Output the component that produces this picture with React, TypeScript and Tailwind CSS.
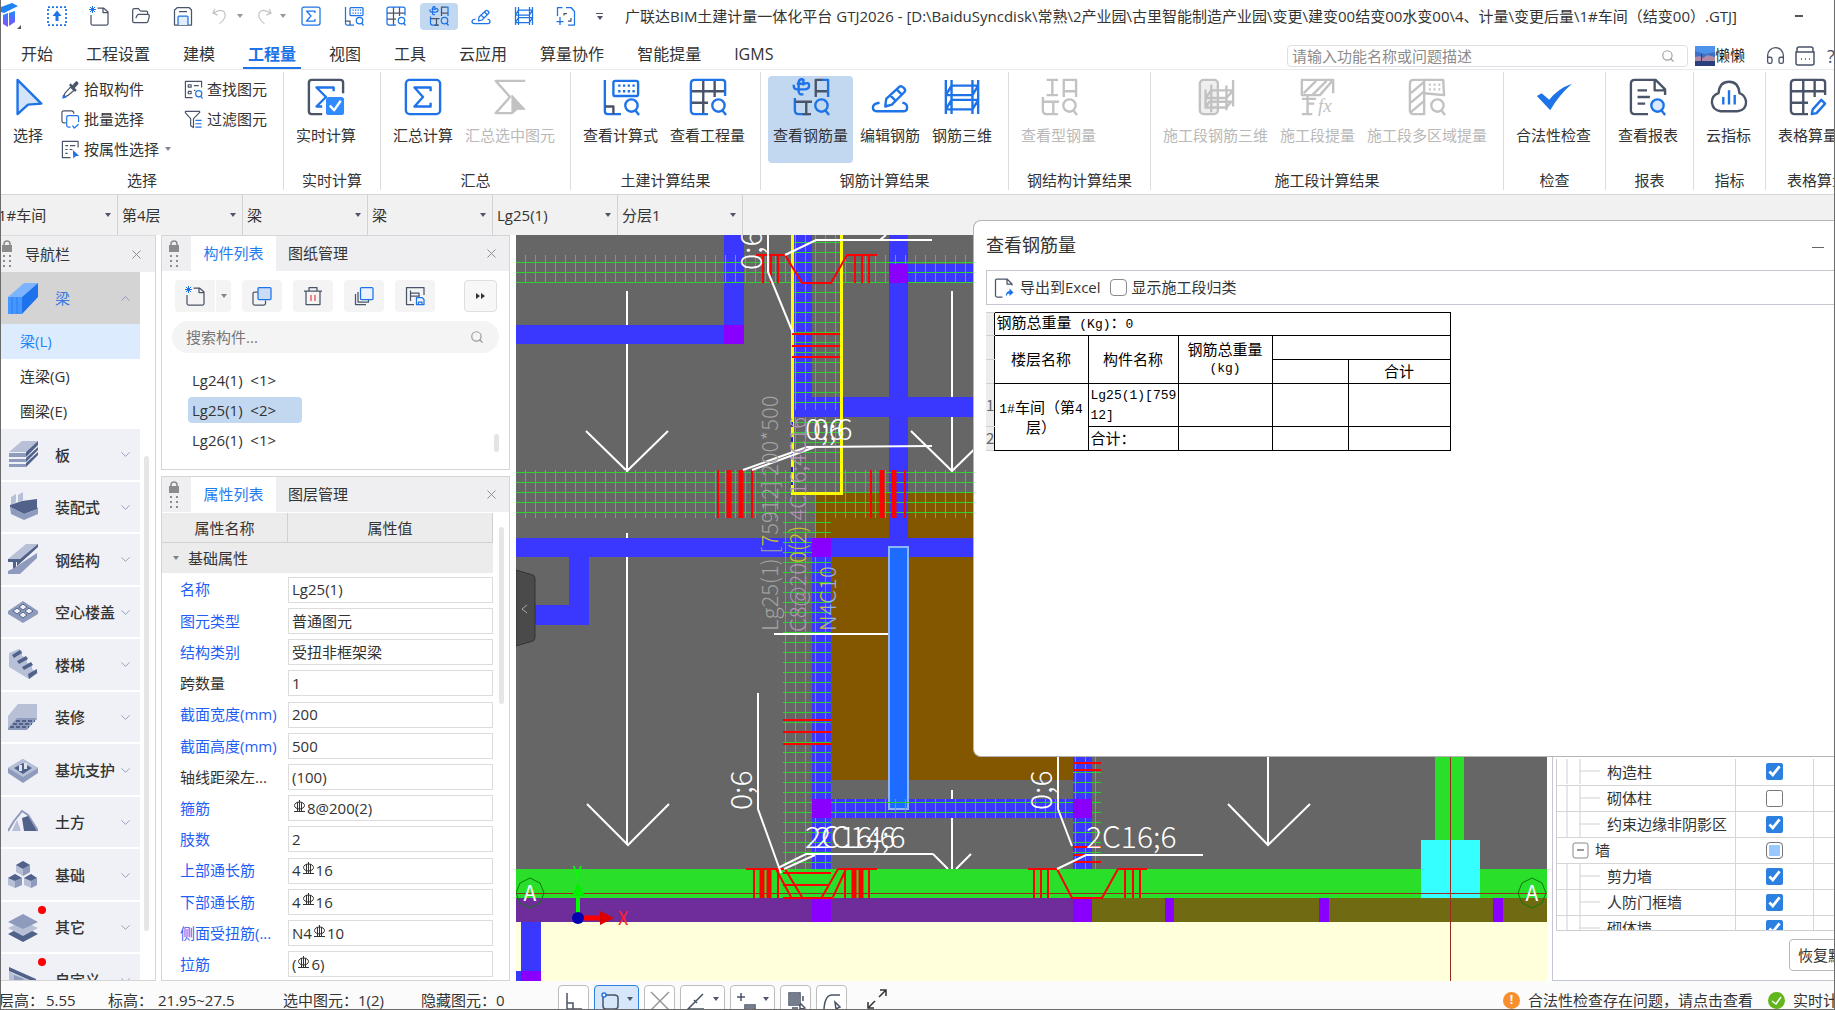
import React, { useState } from 'react';
import { ChevronDown, ChevronUp, FolderOpen, Headphones, Search, X } from 'lucide-react';

const BLUE = '#1e73e8';
const DARK = '#4a5468';
const GREY = '#c2c2c2';

interface IconProps {
  name: string;
  size?: number;
  off?: boolean;
}

const Glyph: React.FC<IconProps> = ({ name, size = 38, off = false }) => {
  const b = off ? GREY : BLUE;
  const d = off ? GREY : DARK;
  const lens = (
    <g stroke={b}>
      <circle cx="31" cy="29" r="6.5" />
      <path d="M35 34L39 39" />
    </g>
  );
  const shapes: Record<string, React.ReactNode> = {
    cursor: <path d="M9 2L34 27L20 28L9 38Z" stroke={b} fill="#d4e5fb" />,
    realtime: (
      <>
        <path d="M38 16V5Q38 2 35 2H5Q2 2 2 5V35Q2 38 5 38H16" stroke={d} />
        <path d="M28 14V10H10L20 20L10 30H16" stroke={b} />
        <rect x="20" y="20" width="19" height="19" rx="3" fill="#2f8bff" stroke="none" />
        <path d="M24 29L28.500 34L35.500 24" stroke="#fff" />
      </>
    ),
    sigma: (
      <>
        <rect x="2" y="2" width="36" height="36" rx="4" stroke={b} />
        <path d="M28 14V10H11L20 20L11 30H28V26" stroke={b} />
      </>
    ),
    sigmaPick: (
      <>
        <path d="M36 3H5L20 20L5 37H22" stroke={d} />
        <path d="M22 18L36 33H28L22 38Z" fill={d} stroke={d} strokeWidth="1" />
      </>
    ),
    formula: (
      <>
        <path d="M3 2V35Q3 38 6 38H20" stroke={b} />
        <path d="M3 30H12V38" stroke={d} />
        <rect x="12" y="3" width="26" height="16" rx="2" stroke={b} />
        <path d="M17 8H35M17 14H35" stroke={b} strokeDasharray="2.500 2.500" />
        {lens}
      </>
    ),
    gridLens: (
      <>
        <path d="M2 14H38M15 2V38M27 2V20M2 26H20" stroke={d} />
        <path d="M38 19V5Q38 2 35 2H6Q2 2 2 6V34Q2 38 6 38H20" stroke={b} />
        {lens}
      </>
    ),
    rebarLens: (
      <>
        <path d="M12 1Q7 1 7 5V14Q7 18 12 17M12 1V8M2 7Q1 12 6 12H13Q18 12 18 8T13 6M5 6H13" stroke={b} />
        <path d="M25 20V2H33M25 14H38" stroke={d} />
        <path d="M32 2H38V20M3 21V34Q3 38 7 38H18" stroke={b} />
        <path d="M3 25H21M15 25V38M11 38H20" stroke={d} />
        {lens}
      </>
    ),
    steelLens: (
      <>
        <path d="M7 2H19M13 2V18M7 18H19" stroke={d} />
        <path d="M25 20V2H38V20M25 14H38" stroke={d} />
        <path d="M3 20V34Q3 38 7 38H19M3 25H20M14 25V38" stroke={d} />
        {lens}
      </>
    ),
    edit: (
      <>
        <path d="M15 30L16 22L30 9Q32 8 34 10L35 11Q37 13 35 15L22 28ZM27 12L33 18M20 18L26 24" stroke={b} />
        <path d="M9 26Q2 27 2 31T7 35H34Q38 35 38 31T33 26" stroke={b} />
      </>
    ),
    rebar3d: (
      <path d="M3 2V38M9 2V38M31 2V38M37 2V38M9 8H37L31 18H3ZM9 23H37L31 33H3Z" stroke={b} />
    ),
    stageRebar: (
      <>
        <rect x="3" y="2" width="19" height="36" rx="4" fill="#efefef" stroke={d} />
        <path d="M9 12V32M15 7V36M31 8V34M38 2V30M15 13H38L31 21H9ZM13 25H36L31 31H9Z" stroke={d} />
      </>
    ),
    stageTake: (
      <>
        <path d="M36 16V2H3V18H22L36 2M5 16L18 3M14 18L29 3M9 18V38M3 38H14M9 27H16M3 22H18" stroke={d} />
        <text x="20" y="36" fontSize="20" fontStyle="italic" fontFamily="Liberation Serif, serif" fill={d} stroke="none">fx</text>
      </>
    ),
    stageArea: (
      <>
        <path d="M17 2V38H6Q2 38 2 34V6Q2 2 6 2Z" stroke={d} />
        <path d="M3 16L17 4M3 26L17 14M3 36L17 24M17 2H37L38 18L17 16" stroke={d} />
        <path d="M22 7H35M22 12H35" stroke={d} strokeDasharray="2 3" />
        {lens}
      </>
    ),
    check: <path d="M2 19L7 16L15 23Q24 11 39 6Q25 18 16 34Z" fill={b} stroke="none" />,
    report: (
      <>
        <path d="M38 18V12L28 2H6Q2 2 2 6V34Q2 38 6 38H20M27 3V13H37M9 13H19M9 20H22M9 27H17" stroke={d} />
        <circle cx="30" cy="29" r="6.500" fill="#dbe9fc" stroke={b} />
        <path d="M34 34L38 39" stroke={b} />
      </>
    ),
    cloud: (
      <>
        <path d="M11 35H29Q38 34 38 25Q37 18 31 16Q30 4 20 4T9 16Q2 18 2 26Q3 34 11 35Z" stroke={d} />
        <path d="M14 20V28M20 13V28M26 18V28" stroke={b} />
      </>
    ),
    gridPen: (
      <>
        <path d="M38 18V5Q38 2 35 2H6Q2 2 2 6V34Q2 38 6 38H20M2 14H38M15 2V38M27 2V20M2 26H20" stroke={d} />
        <path d="M24 38L25 33L34 23L38 27L29 37Z" stroke={b} />
      </>
    ),
    upload: (
      <>
        <rect x="2" y="2" width="36" height="36" stroke={b} strokeWidth="3.500" strokeDasharray="4 4" />
        <path d="M20 30V17" stroke={b} strokeWidth="6" />
        <path d="M11 20L20 9L29 20Z" fill={b} stroke="none" />
      </>
    ),
    newFile: (
      <>
        <path d="M17 4H29L38 12V35Q38 38 35 38H7Q4 38 4 35V18M28 4V13H38" stroke={d} />
        <path d="M7 0V14M0 7H14M2 2L12 12M12 2L2 12" stroke={b} strokeWidth="2" />
      </>
    ),
    save: (
      <>
        <path d="M3 38V8L9 3H32L37 8V38ZM12 11H28" stroke={d} />
        <path d="M10 38V22Q10 20 12 20H28Q30 20 30 22V38" stroke={b} fill="#e3eefc" />
      </>
    ),
    undo: <path d="M8 4L4 13L14 17M5 13Q22 2 29 12Q33 24 18 35" stroke={GREY} />,
    redo: <path d="M32 4L36 13L26 17M35 13Q18 2 11 12Q7 24 22 35" stroke={GREY} />,
    fileAdd: (
      <>
        <path d="M3 20V3H13M20 3H30L37 11V38H24M8 22V38M1 31H15" stroke={b} />
        <path d="M22 15H16V19M30 24V30H24" stroke={d} />
      </>
    ),
    picker: (
      <>
        <path d="M6 36L8 28L20 15L27 22L14 33Z" stroke={d} />
        <path d="M17 11L30 25L33 21L29 17L37 8Q36 1 31 3L24 11L20 7Z" fill={d} stroke="none" />
        <path d="M4 38L10 36L5 32Z" fill={b} stroke={b} />
      </>
    ),
    batch: (
      <>
        <path d="M10 27H6Q2 27 2 23V6Q2 2 6 2H22Q27 2 27 8" stroke={d} />
        <path d="M37 26V15Q37 12 34 12H16Q12 12 12 16V32Q12 36 16 36H20M24 33L28 38L37 30" stroke={b} />
      </>
    ),
    attr: (
      <>
        <path d="M36 16V3H3V37H20M9 12H15M19 12H30M9 20H14M18 20H24M9 28H14" stroke={d} />
        <path d="M25 21L38 33L31 34L26 39Z" fill={b} stroke="none" />
      </>
    ),
    find: (
      <>
        <path d="M37 16V3H3V37H18M9 10H15V15H9ZM9 24H15V29H9ZM21 12H31M21 22H24" stroke={d} />
        {lens}
      </>
    ),
    filter: (
      <>
        <path d="M34 3H3V6L14 18V33L20 37V18L34 4" stroke={d} />
        <path d="M24 22H37M24 29H37M24 36H37" stroke={b} />
      </>
    ),
    copy: (
      <>
        <path d="M11 12H5Q2 12 2 15V35Q2 38 5 38H24Q27 38 27 35V29" stroke={d} />
        <rect x="12" y="3" width="26" height="24" rx="2" fill="#cadcf6" stroke={b} />
      </>
    ),
    trash: (
      <>
        <path d="M2 10H38M12 9V3H28V9M6 11V37H34V11" stroke={d} />
        <path d="M16 18V30M24 18V30" stroke="#e5484d" />
      </>
    ),
    layers: (
      <>
        <path d="M3 16V37H24M8 12V32H29V28" stroke={d} />
        <rect x="13" y="3" width="25" height="24" rx="2" fill="#e9f2fd" stroke={b} />
      </>
    ),
    saveLib: (
      <>
        <path d="M38 18V3H3V37H18M11 9V30M11 14H28V20M11 20H30" stroke={d} />
        <path d="M23 23H34L38 27V37H23ZM27 37V32H34V37" stroke={b} />
      </>
    ),
    exportFile: (
      <>
        <path d="M36 15V12L26 2H5Q3 2 3 5V35Q3 38 6 38H17M26 3V12H36" stroke={d} />
        <path d="M24 37Q23 27 31 26V21L39 29L31 36V31Q26 31 24 37Z" fill={b} stroke="none" />
      </>
    ),
  };
  return (
    <svg width={size} height={size} viewBox="0 0 40 40" fill="none" strokeWidth="2.500" strokeLinejoin="round" className="shrink-0">
      {shapes[name]}
    </svg>
  );
};

const Caret: React.FC<{ className?: string }> = ({ className = '' }) => (
  <svg width="6" height="4" viewBox="0 0 6 4" className={`shrink-0 fill-[#4d5566] ${className}`}>
    <path d="M0 0H6L3 4Z" />
  </svg>
);

const LIGHT = '#b7c0d6';
const MID = '#8e9bbd';
const DEEP = '#50628a';

const navIcons: Record<string, React.ReactNode> = {
  beam: (
    <>
      <path d="M0 14L16 0H30L14 14Z" fill="#7cb4ff" />
      <path d="M14 14L30 0V14L14 31Z" fill="#1f72ee" />
      <path d="M0 14H14V31H0Z" fill="#4596ff" />
      <path d="M4 14V31M9 14V31" stroke="#2a7ff2" />
    </>
  ),
  slab: (
    <>
      <path d="M1 13L14 2H30L18 13Z" fill={LIGHT} />
      <path d="M1 14H18V18H1ZM1 20H18V23H1ZM1 25H18V28H1Z" fill={MID} />
      <path d="M18 13L30 2V6L18 18ZM18 19L30 8V11L18 23ZM18 24L30 13V16L18 28Z" fill={DEEP} />
    </>
  ),
  prefab: (
    <>
      <path d="M3 5L8 2V10L3 13ZM10 3L15 0V8L10 10Z" fill={LIGHT} />
      <path d="M2 13L14 9L29 7V15L30 17L16 22L2 15Z" fill={DEEP} />
      <path d="M2 15L16 22V28L3 22ZM16 22L30 17V22L16 28Z" fill={MID} />
    </>
  ),
  steel: (
    <>
      <path d="M0 15L18 0H30L12 15Z" fill={LIGHT} />
      <path d="M0 15H12V18H8V27L5 28V18H0ZM12 15L30 0V3L9 22V17Z" fill={DEEP} />
      <path d="M0 27L6 24L29 9V14L12 30H0Z" fill={MID} />
    </>
  ),
  hollow: (
    <>
      <path d="M15 4L30 14V17L15 26L0 17V14Z" fill={MID} />
      <path d="M5 14L9 11L13 14L9 17ZM11 10L15 7L19 10L15 13ZM17 14L21 11L25 14L21 17ZM11 18L15 15L19 18L15 21Z" fill="#eff1f6" stroke={DEEP} />
    </>
  ),
  stair: (
    <>
      <path d="M1 4L11 0L14 2V7L19 9V14L24 16V20L30 24L21 30L1 18Z" fill={LIGHT} />
      <path d="M4 6L12 1L14 4L6 9ZM9 12L18 7L20 10L11 15ZM14 18L23 13L25 16L16 21ZM20 25L29 20V24L21 30Z" fill={DEEP} />
    </>
  ),
  finish: (
    <>
      <path d="M10 2H29V18H10L0 26V14Z" fill={LIGHT} />
      <path d="M0 26L9 16H29L19 28H0Z" fill={MID} />
      <path d="M8 19H27M5 22H24M2 25H21" stroke={DEEP} strokeWidth="2" strokeDasharray="4 2" />
    </>
  ),
  pit: (
    <>
      <path d="M15 4L30 13V18L15 28L0 18V13Z" fill={MID} />
      <path d="M15 4L30 13L15 22L0 13Z" fill={LIGHT} />
      <path d="M15 8L24 13L15 19L6 13Z" fill={DEEP} />
      <path d="M11 10H14V16H11ZM16 8H19V14H16Z" fill="#dfe4ef" />
    </>
  ),
  earth: (
    <>
      <path d="M0 24L6 14L14 4L20 8L30 24" fill="none" stroke={MID} strokeWidth="2" />
      <path d="M14 11L20 9L29 24H16Z" fill={DEEP} />
      <path d="M4 24L9 13L13 24Z" fill={LIGHT} />
    </>
  ),
  base: (
    <>
      <path d="M8 5L15 1L22 5V12L15 16L8 12ZM0 18L7 14L14 18V25L7 28L0 25ZM16 18L23 14L29 18V25L23 28L16 25Z" fill={LIGHT} />
      <path d="M8 5L15 1L22 5L15 9ZM0 18L7 14L14 18L7 21ZM16 18L23 14L29 18L23 21Z" fill={DEEP} />
      <path d="M15 9L22 5V12L15 16ZM7 21L14 18V25L7 28ZM23 21L29 18V25L23 28Z" fill={MID} />
    </>
  ),
  other: (
    <>
      <path d="M15 14L30 22L15 30L0 22Z" fill={DEEP} />
      <path d="M15 9L30 16L15 24L0 16Z" fill={LIGHT} />
      <path d="M15 2L30 10L15 17L0 10Z" fill={MID} />
    </>
  ),
  custom: (
    <>
      <path d="M1 2L28 14V18L1 6Z" fill={DEEP} />
      <path d="M1 6V28L28 18L6 9V20L16 16Z" fill={LIGHT} />
      <path d="M6 10L16 14L6 20Z" fill={MID} />
    </>
  ),
};

const NavIcon: React.FC<{ name: string }> = ({ name }) => (
  <svg width="30" height="31" viewBox="0 0 30 31" className="shrink-0">{navIcons[name]}</svg>
);

const ribbonTabs = ['开始', '工程设置', '建模', '工程量', '视图', '工具', '云应用', '算量协作', '智能提量', 'IGMS'];

interface Tool {
  label: string;
  icon: string;
  off?: boolean;
  active?: boolean;
}

interface ToolGroup {
  title: string;
  width: string;
  tools: Tool[];
}

const toolGroups: ToolGroup[] = [
  { title: '实时计算', width: 'w-[96px]', tools: [{ label: '实时计算', icon: 'realtime' }] },
  {
    title: '汇总',
    width: 'w-[189px]',
    tools: [
      { label: '汇总计算', icon: 'sigma' },
      { label: '汇总选中图元', icon: 'sigmaPick', off: true },
    ],
  },
  {
    title: '土建计算结果',
    width: 'w-[189px]',
    tools: [
      { label: '查看计算式', icon: 'formula' },
      { label: '查看工程量', icon: 'gridLens' },
    ],
  },
  {
    title: '钢筋计算结果',
    width: 'w-[247px]',
    tools: [
      { label: '查看钢筋量', icon: 'rebarLens', active: true },
      { label: '编辑钢筋', icon: 'edit' },
      { label: '钢筋三维', icon: 'rebar3d' },
    ],
  },
  { title: '钢结构计算结果', width: 'w-[141px]', tools: [{ label: '查看型钢量', icon: 'steelLens', off: true }] },
  {
    title: '施工段计算结果',
    width: 'w-[352px]',
    tools: [
      { label: '施工段钢筋三维', icon: 'stageRebar', off: true },
      { label: '施工段提量', icon: 'stageTake', off: true },
      { label: '施工段多区域提量', icon: 'stageArea', off: true },
    ],
  },
  { title: '检查', width: 'w-[101px]', tools: [{ label: '合法性检查', icon: 'check' }] },
  { title: '报表', width: 'w-[87px]', tools: [{ label: '查看报表', icon: 'report' }] },
  { title: '指标', width: 'w-[71px]', tools: [{ label: '云指标', icon: 'cloud' }] },
  { title: '表格算量', width: 'w-[102px]', tools: [{ label: '表格算量', icon: 'gridPen' }] },
];

const quickTools: Tool[] = [
  { label: '汇总计算', icon: 'sigma' },
  { label: '查看计算式', icon: 'formula' },
  { label: '查看工程量', icon: 'gridLens' },
  { label: '查看钢筋量', icon: 'rebarLens', active: true },
  { label: '编辑钢筋', icon: 'edit' },
  { label: '钢筋三维', icon: 'rebar3d' },
  { label: '新增', icon: 'fileAdd' },
];

const fileTools: Tool[] = [
  { label: '上传', icon: 'upload' },
  { label: '新建', icon: 'newFile' },
  { label: '打开', icon: 'folder' },
  { label: '保存', icon: 'save' },
];

const TitleBar: React.FC = () => (
  <header className="flex h-8 shrink-0 items-center">
    <svg width="20" height="30" viewBox="0 0 20 30" className="shrink-0">
      <defs>
        <linearGradient id="logo" x1="0" y1="0" x2="0" y2="1">
          <stop offset="0" stopColor="#1f8bff" />
          <stop offset="1" stopColor="#8b4dff" />
        </linearGradient>
      </defs>
      <path d="M0 6L11 2L17 5L3 12L0 11Z" fill="#1f83f5" />
      <path d="M2 14L7 12V26L2 23ZM8 12L14 10V21L8 25Z" fill="url(#logo)" />
      <path d="M20 24V28H16Z" fill="#555" />
    </svg>
    <div className="ml-[17px] flex gap-1">
      {fileTools.map((tool) => (
        <button key={tool.label} aria-label={tool.label} className="flex h-7 w-[38px] items-center justify-center">
          {tool.icon === 'folder' ? <FolderOpen size={20} color={DARK} strokeWidth={1.500} /> : <Glyph name={tool.icon} size={20} />}
        </button>
      ))}
    </div>
    <div className="ml-[4px] flex gap-[6px]">
      {['undo', 'redo'].map((name) => (
        <button key={name} aria-label={name} className="flex h-7 w-[37px] items-center justify-end gap-[7px]">
          <Glyph name={name} size={19} />
          <Caret className="opacity-60" />
        </button>
      ))}
    </div>
    <div className="ml-[6px] flex w-[293px] justify-between">
      {quickTools.map((tool) => (
        <button
          key={tool.label}
          aria-label={tool.label}
          className={`flex h-[27px] w-[38px] items-center justify-center rounded-sm ${tool.active ? 'bg-[#c2d8f1]' : ''}`}
        >
          <Glyph name={tool.icon} size={20} />
        </button>
      ))}
    </div>
    <button aria-label="更多" className="ml-[11px] flex flex-col items-center gap-[2px]">
      <span className="h-px w-[7px] bg-[#4d5566]" />
      <Caret />
    </button>
    <h1 className="ml-[22px] min-w-0 flex-1 truncate text-[15px] text-[#333]">
      广联达BIM土建计量一体化平台 GTJ2026 - [D:\BaiduSyncdisk\常熟\2产业园\古里智能制造产业园\变更\建变00结变00水变00\4、计量\变更后量\1#车间（结变00）.GTJ]
    </h1>
    <button aria-label="最小化" className="mr-[31px] h-[2px] w-2 bg-[#555]" />
  </header>
);

const TabRow: React.FC = () => {
  const [active, setActive] = useState('工程量');
  return (
    <div className="flex h-[38px] shrink-0 items-center justify-between border-b border-[#e8eaed]">
      <nav className="flex h-full pl-[15px]">
        {ribbonTabs.map((tab) => (
          <button
            key={tab}
            onClick={() => setActive(tab)}
            className={`mr-[23px] h-full border-b-2 px-[5px] pt-[10px] text-base leading-[25px] ${
              active === tab ? 'border-[#1e73e8] font-bold text-[#1e73e8]' : 'border-transparent text-[#333]'
            }`}
          >
            {tab}
          </button>
        ))}
      </nav>
      <div className="flex items-center pt-[10px]">
        <label className="flex h-[22px] w-[401px] items-center rounded-sm border border-[#dcdfe3] px-1">
          <input aria-label="功能搜索" placeholder="请输入功能名称或问题描述" className="min-w-0 flex-1 text-[15px] leading-5 outline-none placeholder:text-[#8c8c8c]" />
          <Search size={14} className="mr-2 text-[#a0a0a0]" />
        </label>
        <svg width="20" height="20" viewBox="0 0 20 20" className="ml-[7px]">
          <path d="M0 0H20V20H0Z" fill="#3f6fc4" />
          <path d="M0 0H20V6L10 8L0 5Z" fill="#4e93ea" />
          <path d="M0 11L5 10L8 12L12 9L20 11V16H0Z" fill="#b08aa5" />
          <path d="M0 15H20V20H0ZM6 8H7V15H6Z" fill="#29407c" />
        </svg>
        <span className="text-[15px] text-[#222]">懒懒</span>
        <Headphones size={21} strokeWidth={1.500} color={DARK} className="ml-[20px]" />
        <svg width="20" height="20" viewBox="0 0 20 20" fill="none" stroke={DARK} strokeWidth="1.500" className="ml-[9px]">
          <path d="M2 6V3Q2 1 4 1H16Q18 1 18 3V6ZM1 6H19V17Q19 19 17 19H3Q1 19 1 17ZM6 13H7M10 13H11M14 13H15" />
        </svg>
        <span className="ml-[12px] w-[7px] overflow-hidden text-lg leading-5 text-[#4a5468]">?</span>
      </div>
    </div>
  );
};

const SmallTool: React.FC<{ icon: string; label: string; menu?: boolean }> = ({ icon, label, menu }) => (
  <button className="flex h-[30px] items-center gap-[4px] whitespace-nowrap text-[15px]">
    <Glyph name={icon} size={19} />
    {label}
    {menu && <Caret className="ml-[2px] opacity-70" />}
  </button>
);

const Ribbon: React.FC = () => (
  <div className="flex h-[125px] shrink-0 overflow-hidden border-b border-[#d6d6d6] text-[15px] text-[#333]">
    <section className="flex w-[282px] shrink-0 flex-col pt-[4px]">
      <div className="flex h-[90px]">
        <button className="ml-[11px] flex w-8 flex-col items-center pt-1">
          <Glyph name="cursor" />
          <span className="mt-[7px] whitespace-nowrap leading-6">选择</span>
        </button>
        <div className="ml-[17px]">
          <SmallTool icon="picker" label="拾取构件" />
          <SmallTool icon="batch" label="批量选择" />
          <SmallTool icon="attr" label="按属性选择" menu />
        </div>
        <div className="ml-[13px]">
          <SmallTool icon="find" label="查找图元" />
          <SmallTool icon="filter" label="过滤图元" />
        </div>
      </div>
      <h2 className="mt-[4px] text-center leading-6">选择</h2>
    </section>
    {toolGroups.map((group) => (
      <React.Fragment key={group.title}>
        <div className="mt-[2px] h-[118px] w-px shrink-0 bg-[#dcdcdc]" />
        <section className={`flex shrink-0 flex-col pt-[6px] ${group.width}`}>
          <div className="flex gap-[2px] pl-[7px]">
            {group.tools.map((tool) => (
              <button
                key={tool.label}
                disabled={tool.off}
                className={`flex h-[87px] shrink-0 flex-col items-center rounded-sm px-[5px] pt-[2px] ${tool.active ? 'bg-[#c2d8f1]' : ''} ${
                  tool.off ? 'text-[#b9b9b9]' : ''
                }`}
              >
                <Glyph name={tool.icon} off={tool.off} />
                <span className="mt-[7px] whitespace-nowrap leading-6">{tool.label}</span>
              </button>
            ))}
          </div>
          <h2 className="mt-[5px] whitespace-nowrap text-center leading-6">{group.title}</h2>
        </section>
      </React.Fragment>
    ))}
  </div>
);

const contextPickers = [
  { label: '楼层', value: '第4层' },
  { label: '构件大类', value: '梁' },
  { label: '构件类型', value: '梁' },
  { label: '构件', value: 'Lg25(1)' },
  { label: '分层', value: '分层1' },
];

const ContextBar: React.FC = () => (
  <div className="flex h-10 shrink-0 overflow-hidden bg-[#f1f1f1] text-[15px] text-[#333]">
    <label className="-ml-[9px] flex w-[126px] shrink-0 items-center border-r border-[#d2d2d2] pr-[6px]">
      <select aria-label="工程" className="h-full min-w-0 flex-1 appearance-none pl-[6px] outline-none">
        <option>1#车间</option>
      </select>
      <Caret />
    </label>
    {contextPickers.map((picker) => (
      <label key={picker.label} className="flex w-[125px] shrink-0 items-center border-r border-[#d2d2d2] pr-[6px]">
        <select aria-label={picker.label} className="h-full min-w-0 flex-1 appearance-none pl-[4px] outline-none">
          <option>{picker.value}</option>
        </select>
        <Caret />
      </label>
    ))}
  </div>
);

const PanelGrip: React.FC = () => (
  <svg width="12" height="28" viewBox="0 0 12 28" className="shrink-0" fill="#8b8b8b">
    <path d="M1 5H11V12H1Z" />
    <path d="M3 6V4Q3 1 6 1T9 4V6" fill="none" stroke="#8b8b8b" strokeWidth="1.500" />
    <path d="M2 15H4V17H2ZM8 15H10V17H8ZM2 20H4V22H2ZM8 20H10V22H8ZM2 25H4V27H2ZM8 25H10V27H8Z" />
  </svg>
);

const navItems = [
  { label: '板', icon: 'slab' },
  { label: '装配式', icon: 'prefab' },
  { label: '钢结构', icon: 'steel' },
  { label: '空心楼盖', icon: 'hollow' },
  { label: '楼梯', icon: 'stair' },
  { label: '装修', icon: 'finish' },
  { label: '基坑支护', icon: 'pit' },
  { label: '土方', icon: 'earth' },
  { label: '基础', icon: 'base' },
  { label: '其它', icon: 'other', dot: true },
  { label: '自定义', icon: 'custom', dot: true },
];

const NavPanel: React.FC = () => (
  <aside className="flex w-[155px] shrink-0 flex-col overflow-hidden border-r border-b border-[#d5d5d8] text-[15px] text-[#333]">
    <div className="flex h-[37px] shrink-0 items-center border-t border-[#dcdcdf] bg-[#efeff1] pr-[11px]">
      <PanelGrip />
      <h2 className="ml-[12px] flex-1">导航栏</h2>
      <button aria-label="关闭导航栏"><X size={15} strokeWidth={1.500} className="text-[#8a8a8a]" /></button>
    </div>
    <div className="flex min-h-0 flex-1">
      <div className="min-w-0 flex-1 overflow-hidden">
        <button className="flex h-[52px] w-full items-center bg-[#d4d4d4] px-[7px]">
          <NavIcon name="beam" />
          <span className="ml-[17px] flex-1 text-left text-[#3b7be0]">梁</span>
          <ChevronUp size={15} strokeWidth={1.500} className="text-[#8d9ab8]" />
        </button>
        <a href="#beam" className="block h-[35px] bg-[#ddebff] pl-[19px] leading-[35px] text-[#1e86f5]">梁(L)</a>
        <a href="#link-beam" className="block h-[35px] pl-[19px] leading-[35px]">连梁(G)</a>
        <a href="#ring-beam" className="block h-[35px] pl-[19px] leading-[35px]">圈梁(E)</a>
        <div className="flex h-[578px] flex-col">
          {navItems.map((item) => (
            <button key={item.label} className="relative flex flex-1 items-center border-b-2 border-white bg-[#eff1f6] px-[7px] pt-px font-medium">
              <NavIcon name={item.icon} />
              {item.dot && <span className="absolute top-[4px] left-[37px] size-2 rounded-full bg-[#f00]" />}
              <span className="ml-[17px] flex-1 whitespace-nowrap text-left">{item.label}</span>
              <ChevronDown size={15} strokeWidth={1.500} className="shrink-0 text-[#8d9ab8]" />
            </button>
          ))}
        </div>
      </div>
      <div className="flex w-[15px] flex-col pl-1">
        <div className="mt-[184px] h-[475px] w-[5px] rounded-full bg-[#e6e6e8]" />
      </div>
    </div>
  </aside>
);

const PanelTabs: React.FC<{ tabs: string[] }> = ({ tabs }) => (
  <div className="flex h-[35px] shrink-0 items-center bg-[#efeff1] pr-[10px] pl-[6px]">
    <PanelGrip />
    <button className="ml-[11px] h-full w-[85px] bg-white text-[#1e7cf0]">{tabs[0]}</button>
    <button className="h-full px-[12px]">{tabs[1]}</button>
    <button aria-label={`关闭${tabs[0]}`} className="ml-auto"><X size={15} strokeWidth={1.500} className="text-[#8a8a8a]" /></button>
  </div>
);

const components = ['Lg24(1)', 'Lg25(1)', 'Lg26(1)'];

const ComponentPanel: React.FC = () => (
  <section className="flex h-[235px] shrink-0 flex-col border border-[#d5d5d8]">
    <PanelTabs tabs={['构件列表', '图纸管理']} />
    <div className="mt-[9px] flex items-center pr-[12px] pl-[13px]">
      <button aria-label="新建构件" className="flex h-8 w-10 items-center justify-center rounded-l-sm bg-[#f4f4f5]"><Glyph name="newFile" size={20} /></button>
      <button aria-label="新建菜单" className="ml-px flex h-8 w-[15px] items-center justify-center rounded-r-sm bg-[#f4f4f5]"><Caret className="opacity-70" /></button>
      <div className="ml-[11px] flex gap-[11px]">
        {['copy', 'trash', 'layers', 'saveLib'].map((icon) => (
          <button key={icon} aria-label={icon} className="flex h-8 w-10 items-center justify-center rounded-sm bg-[#f4f4f5]"><Glyph name={icon} size={20} /></button>
        ))}
      </div>
      <button aria-label="更多" className="ml-auto flex h-8 w-[33px] items-center justify-center rounded-sm border border-[#dfdfe1] bg-[#f7f7f8]">
        <svg width="9" height="6" viewBox="0 0 9 6" fill="#333"><path d="M0 0L4 3L0 6ZM5 0L9 3L5 6Z" /></svg>
      </button>
    </div>
    <label className="mx-[10px] mt-[9px] flex h-8 shrink-0 items-center rounded-full bg-[#f4f4f4] pr-[15px] pl-[14px]">
      <input aria-label="搜索构件" placeholder="搜索构件..." className="min-w-0 flex-1 outline-none placeholder:text-[#777]" />
      <Search size={14} className="text-[#999]" />
    </label>
    <div className="mt-[14px] flex min-h-0 justify-between">
      <ul className="flex flex-col gap-1 pl-[26px]">
        {components.map((name, i) => (
          <li key={name} className={`h-[26px] w-[114px] rounded-sm pl-1 leading-[26px] whitespace-pre ${i === 1 ? 'bg-[#c2d8f1]' : ''}`}>
            {`${name}  <${i === 1 ? 2 : 1}>`}
          </li>
        ))}
      </ul>
      <div className="mt-[67px] mr-[10px] h-[18px] w-[5px] rounded-full bg-[#e4e4e4]" />
    </div>
  </section>
);

interface Property {
  name: string;
  value: string;
  plain?: boolean;
  prefix?: string;
}

// prefix is the text that stands before the rebar grade sign
const properties: Property[] = [
  { name: '名称', value: 'Lg25(1)' },
  { name: '图元类型', value: '普通图元' },
  { name: '结构类别', value: '受扭非框架梁' },
  { name: '跨数量', value: '1', plain: true },
  { name: '截面宽度(mm)', value: '200' },
  { name: '截面高度(mm)', value: '500' },
  { name: '轴线距梁左...', value: '(100)', plain: true },
  { name: '箍筋', value: '8@200(2)', prefix: '' },
  { name: '肢数', value: '2' },
  { name: '上部通长筋', value: '16', prefix: '4' },
  { name: '下部通长筋', value: '16', prefix: '4' },
  { name: '侧面受扭筋(...', value: '10', prefix: 'N4' },
  { name: '拉筋', value: '6)', prefix: '(' },
];

const PropertyPanel: React.FC = () => (
  <section className="mt-[6px] flex min-h-0 flex-1 flex-col border border-[#d5d5d8]">
    <PanelTabs tabs={['属性列表', '图层管理']} />
    <div className="mt-px flex min-h-0 flex-1 overflow-hidden">
      <div className="min-w-0 flex-1">
        <div className="flex h-[30px] border-r border-b border-[#d0d0d0] bg-[#ececec] text-center leading-[30px]">
          <div className="w-[126px] border-r border-[#d0d0d0]">属性名称</div>
          <div className="flex-1">属性值</div>
        </div>
        <button className="flex h-[30px] w-full items-center bg-[#ececec] pl-[11px]">
          <Caret className="opacity-70" />
          <span className="ml-[9px]">基础属性</span>
        </button>
        <div className="mt-px flex h-[406px] flex-col">
          {properties.map((property) => (
            <label key={property.name} className="flex flex-1 items-center pl-[18px]">
              <span className={`w-[108px] whitespace-nowrap ${property.plain ? 'text-[#333]' : 'text-[#1f5ff5]'}`}>{property.name}</span>
              <span className="flex h-[26px] min-w-0 flex-1 items-center border border-[#dcdcdc] px-[3px]">
                {property.prefix !== undefined && (
                  <>
                    <span>{property.prefix}</span>
                    <svg width="11" height="13" viewBox="0 0 11 13" fill="none" stroke="#333" className="mx-[2px] mb-1 shrink-0">
                      <ellipse cx="5.500" cy="5.500" rx="5" ry="3.500" />
                      <path d="M3.500 2V11M5.500 0V11M7.500 2V11M0 11.500H11" />
                    </svg>
                  </>
                )}
                <input defaultValue={property.value} className="min-w-0 flex-1 outline-none" />
              </span>
            </label>
          ))}
        </div>
      </div>
      <div className="flex w-4 flex-col items-center">
        <div className="mt-[14px] h-[177px] w-[5px] rounded-full bg-[#e6e6e8]" />
      </div>
    </div>
  </section>
);

const range = (from: number, to: number, step = 10) => {
  const out: number[] = [];
  for (let v = from; v <= to; v += step) out.push(v);
  return out;
};

interface MeshProps {
  x1: number;
  x2: number;
  y1: number;
  y2: number;
  cols: number;
  rows: number;
}

const Mesh: React.FC<MeshProps> = ({ x1, x2, y1, y2, cols, rows }) => (
  <path
    stroke="#2fd02f"
    strokeWidth="1"
    shapeRendering="crispEdges"
    d={range(cols, x2).map((x) => `M${x} ${y1}V${y2}`).join('') + range(rows, y2).map((y) => `M${x1} ${y}H${x2}`).join('')}
  />
);

const Bubble: React.FC<{ x: number }> = ({ x }) => (
  <g transform={`translate(${x} 893)`}>
    <path d="M0-15L10-10L14 0L10 10L0 15L-10 10L-14 0L-10-10Z" stroke="#0c7a0c" fill="none" />
    <text y="8" textAnchor="middle" fontSize="21" fill="#fff">A</text>
  </g>
);

const Drawing: React.FC = () => (
  <svg viewBox="516 235 1031 746" preserveAspectRatio="xMinYMin slice" className="block size-full" fontFamily="'Noto Sans CJK SC', sans-serif">
    <defs>
      <linearGradient id="note" x1="0" y1="0" x2="0" y2="1">
        <stop offset="0.450" stopColor="#cfc52c" />
        <stop offset="0.550" stopColor="#8fb0ee" />
      </linearGradient>
    </defs>
    <path d="M516 235H1547V981H516Z" fill="#666" />
    <path d="M816 493H1073V780H816Z" fill="#835600" />
    <path d="M816 538H831V780H816Z" fill="#666" />
    <g stroke="#fff" strokeWidth="2" fill="none">
      <path d="M627 291V471M586 431L627 471L668 431M627 533V845M587 804L628 845L669 804" />
      <path d="M952 291V471M911 431L952 471L993 431M952 790V869M933 854L948 869M971 854L956 869" />
      <path d="M1268 757V845M1228 804L1268 845L1310 804" />
    </g>
    <g fill="#3a37ff">
      <path d="M724 235H744V325H724ZM516 325H724V344H516ZM793 235H812V397H973V417H793Z" />
      <path d="M889 235H908V538H889ZM908 264H973V283H908ZM516 538H1073V557H516ZM569 557H589V625H535V605H569Z" />
      <path d="M812 557H831V870H812ZM831 799H1073V818H831ZM1073 750H1092V870H1073Z" />
    </g>
    <Mesh x1={516} x2={973} y1={255} y2={283} cols={525} rows={262} />
    <Mesh x1={793} x2={840} y1={235} y2={410} cols={795} rows={242} />
    <Mesh x1={793} x2={840} y1={417} y2={492} cols={795} rows={422} />
    <Mesh x1={516} x2={973} y1={470} y2={518} cols={525} rows={472} />
    <Mesh x1={783} x2={831} y1={518} y2={869} cols={785} rows={522} />
    <Mesh x1={1073} x2={1101} y1={757} y2={869} cols={1075} rows={762} />
    <path d="M889 547H908V809H889Z" fill="#1e6bff" stroke="#8fb5f5" strokeWidth="2" />
    <Mesh x1={831} x2={1073} y1={799} y2={818} cols={835} rows={802} />
    <path d="M724 325H744V344H724ZM889 264H908V283H889ZM812 538H831V557H812ZM812 799H831V818H812ZM1073 799H1092V818H1073Z" fill="#8a00ff" />

    <path d="M1435 750H1464V869H1435ZM516 869H1547V898H516Z" fill="#2adf2a" />
    <path d="M516 898H1073V922H516Z" fill="#6f2c9b" />
    <path d="M1092 898H1547V922H1092Z" fill="#706a12" />
    <path d="M812 898H831V922H812ZM1073 898H1092V922H1073ZM1165 898H1174V922H1165ZM1319 898H1329V922H1319ZM1493 898H1503V922H1493Z" fill="#8a00ff" />
    <path d="M1421 840H1480V898H1421Z" fill="#36ffff" />
    <path d="M516 922H1547V981H516Z" fill="#ffffdc" />
    <path d="M521 922H541V971H521ZM516 971H521V981H516Z" fill="#3a37ff" />
    <path d="M521 971H541V981H521Z" fill="#8a00ff" />
    <path d="M516 893H1547M1450 750V981" stroke="#962d1c" strokeWidth="1" shapeRendering="crispEdges" />

    <path d="M792 235V493H841V235" stroke="#ff0" strokeWidth="3" fill="none" shapeRendering="crispEdges" />
    <path d="M792 422V485" stroke="#2323c8" strokeWidth="2" strokeDasharray="5 10" />
    <g stroke="#f00" strokeWidth="2" fill="none">
      <path d="M756 255H785L802 283H831L847 255H877M763 255V283M771 255V283M778 255V283M855 255V283M862 255V283M869 255V283" />
      <path d="M792 334H840M792 346H840M792 357H840M718 470V518M752 470V518M871 470V518M905 470V518" />
      <path d="M783 720H831M783 732H831M783 744H831M1073 763H1101M1073 770H1101M1073 847H1101M1073 855H1101M1073 862H1101" />
      <path d="M746 869H785L802 897M776 869L791 897M838 869H877M838 869L822 897M846 869L833 897M783 873H831M783 885H829M783 898H833" />
      <path d="M754 869V898M778 869V898M845 869V898M869 869V898" />
      <path d="M1028 869H1057L1072 898H1102L1118 869H1147M1034 869V898M1041 869V898M1048 869V898M1125 869V898M1133 869V898M1140 869V898" />
      <path d="M729 470V518M741 470V518M882 470V518M894 470V518M762 869V898M769 869V898M854 869V898M861 869V898" strokeWidth="5" />
    </g>
    <g stroke="#fff" strokeWidth="2" fill="none">
      <path d="M768 235V272L793 333M785 255L816 240H932M880 240L886 235" />
      <path d="M743 470L807 447L932 446M752 470L815 447M774 634H888" />
      <path d="M758 693V809L781 873M778 868L806 854H933M784 869L815 855M1058 750V809L1072 846M1057 869L1086 855H1203" />
    </g>
    <g fill="#fff" fontSize="30" fontWeight="300">
      <text transform="translate(762 270) rotate(-90)">0;6</text>
      <text transform="translate(752 810) rotate(-90)">0;6</text>
      <text transform="translate(1052 810) rotate(-90)">0;6</text>
      <text x="805" y="440">0;6</text>
      <text x="813" y="440">0;6</text>
      <text x="805" y="848">2C16;6</text>
      <text x="815" y="848">2C14;6</text>
      <text x="1086" y="848">2C16;6</text>
    </g>
    <g fill="#a3a3a3" fontSize="22" fontWeight="300">
      <text transform="translate(778 631) rotate(-90)">Lg25(1) [<tspan fill="#cfc52c">7</tspan>5912] 200*500</text>
      <text transform="translate(806 632) rotate(-90)" fill="#b394b6">C8@20<tspan fill="#cfc52c">0(2)</tspan> 4C16;4C16</text>
      <text transform="translate(836 631) rotate(-90)" fill="url(#note)">N4C10</text>
    </g>

    <path d="M516 570L533 575Q535 576 535 579V637Q535 640 533 641L516 646Z" fill="#4a4a4a" stroke="#333" />
    <path d="M527 605L522 609L527 613" stroke="#aaa" fill="none" />
    <Bubble x={530} />
    <Bubble x={1532} />
    <path d="M578 918V893" stroke="#0f0" strokeWidth="4" />
    <path d="M572 896L578 883L585 896Z" fill="#0e0" />
    <path d="M578 918H602" stroke="#f00" strokeWidth="5" />
    <path d="M600 911L614 918L600 925Z" fill="#d00" />
    <circle cx="578" cy="918" r="6" fill="#0000b0" />
    <text x="573" y="879" fontSize="17" fill="#0f0">Y</text>
    <text x="618" y="925" fontSize="18" fill="#f22">X</text>
  </svg>
);

interface LayerRow {
  name: string;
  checked: boolean;
  group?: boolean;
}

const layerRows: LayerRow[] = [
  { name: '构造柱', checked: true },
  { name: '砌体柱', checked: false },
  { name: '约束边缘非阴影区', checked: true },
  { name: '墙', checked: true, group: true },
  { name: '剪力墙', checked: true },
  { name: '人防门框墙', checked: true },
  { name: '砌体墙', checked: true },
];

const LayerPanel: React.FC = () => (
  <aside className="ml-[5px] flex w-[282px] shrink-0 flex-col justify-end overflow-hidden border-b border-l border-[#c3c7cf] text-[15px] text-[#333]">
    <div className="ml-[3px] h-[172px] overflow-hidden border-b border-l border-[#cfcfcf]">
      <table className="w-full table-fixed">
        <tbody>
          {layerRows.map((row) => (
            <tr key={row.name} className="h-[26px]">
              <td className="w-[178px] border-r border-b border-[#d6d6d6] p-0">
                <label htmlFor={row.name} className="flex h-[25px] items-center whitespace-nowrap">
                  <svg width={row.group ? 38 : 50} height="25" viewBox={row.group ? '0 0 38 25' : '0 0 50 25'} fill="none" stroke="#d0d0d0" className="shrink-0">
                    {row.group ? (
                      <>
                        <rect x="16" y="5" width="15" height="15" rx="2" stroke="#888" fill="#fff" />
                        <path d="M20 12H27" stroke="#333" />
                      </>
                    ) : (
                      <path d="M10 0V25M23 0V25M23 12H43" />
                    )}
                  </svg>
                  {row.name}
                </label>
              </td>
              <td className="w-[78px] border-r border-b border-[#d6d6d6] p-0">
                {row.group ? (
                  <input id={row.name} type="checkbox" className="mx-auto block size-[17px] appearance-none rounded-sm border border-[#777] bg-[#99c8ff] shadow-[inset_0_0_0_2px_white]" />
                ) : (
                  <input id={row.name} type="checkbox" defaultChecked={row.checked} className="mx-auto block size-[17px] accent-[#2b80e0]" />
                )}
              </td>
              <td className="border-b border-[#d6d6d6] p-0" />
            </tr>
          ))}
        </tbody>
      </table>
    </div>
    <div className="h-[49px] shrink-0 pt-2 pl-[236px]">
      <button className="h-8 rounded-sm border border-[#b9b9b9] px-2 whitespace-nowrap">恢复默认</button>
    </div>
  </aside>
);

const Latin: React.FC<{ children: React.ReactNode }> = ({ children }) => (
  <span className="font-['Liberation_Mono',monospace] text-[13px]">{children}</span>
);

const cell = 'border border-black p-0 pb-[2px] leading-[17px]';
const gutter = 'bg-[#ededed] p-0 text-left align-middle border-y border-[#cfcfcf] text-[#666] font-normal';

const RebarDialog: React.FC = () => (
  <section
    role="dialog"
    aria-labelledby="rebar-title"
    className="absolute top-[220px] right-0 left-[972px] flex h-[537px] flex-col overflow-hidden rounded-l-lg border border-r-0 border-[#b5b5b5] bg-white pl-[12px] text-[#333]"
  >
    <div className="flex h-[49px] shrink-0 items-center justify-between pr-[10px] pb-[2px]">
      <h2 id="rebar-title" className="text-lg">查看钢筋量</h2>
      <button aria-label="最小化" className="mt-[6px] h-px w-3 bg-[#666]" />
    </div>
    <div className="flex h-[35px] shrink-0 items-center border border-r-0 border-[#c3c7cf] pl-[7px] text-[15px]">
      <button className="flex items-center gap-[6px]">
        <Glyph name="exportFile" size={20} />
        导出到Excel
      </button>
      <label className="ml-[9px] flex items-center gap-[5px]">
        <input type="checkbox" className="size-[17px] appearance-none rounded-sm border border-[#8a8a8a]" />
        显示施工段归类
      </label>
    </div>
    <table className="mt-[7px] w-[464px] table-fixed border-collapse font-['Noto_Sans_CJK_SC',sans-serif] text-[15px] text-black">
      <colgroup>
        <col className="w-[8px]" />
        <col className="w-[94px]" />
        <col className="w-[90px]" />
        <col className="w-[94px]" />
        <col className="w-[76px]" />
        <col className="w-[102px]" />
      </colgroup>
      <tbody>
        <tr className="h-[23px]">
          <th className={gutter} />
          <td colSpan={5} className={`${cell} pl-[2px]`}>钢筋总重量<Latin> (Kg)</Latin>：<Latin>0</Latin></td>
        </tr>
        <tr className="h-[24px]">
          <th className={gutter} />
          <td rowSpan={2} className={`${cell} text-center`}>楼层名称</td>
          <td rowSpan={2} className={`${cell} text-center`}>构件名称</td>
          <td rowSpan={2} className={`${cell} text-center`}>钢筋总重量<br /><Latin>(kg)</Latin></td>
          <td colSpan={2} className={cell} />
        </tr>
        <tr className="h-[24px]">
          <th className={gutter} />
          <td className={cell} />
          <td className={`${cell} text-center`}>合计</td>
        </tr>
        <tr className="h-[41px]">
          <th className={gutter}>1</th>
          <td rowSpan={2} className={`${cell} text-center whitespace-nowrap`}><Latin>1#</Latin>车间（第<Latin>4</Latin><br />层）</td>
          <td className={`${cell} pl-[2px] align-top`}><Latin>Lg25(1)[759<br />12]</Latin></td>
          <td className={cell} />
          <td className={cell} />
          <td className={cell} />
        </tr>
        <tr className="h-[24px]">
          <th className={gutter}>2</th>
          <td className={`${cell} pl-[2px]`}>合计：</td>
          <td className={cell} />
          <td className={cell} />
          <td className={cell} />
        </tr>
      </tbody>
    </table>
  </section>
);

const statusTools = [
  { label: '正交', width: 'w-[31px]', menu: false, icon: <path d="M3 2V18H18M3 12H9V18" /> },
  { label: '框选', width: 'w-[45px]', menu: true, active: true, icon: <path d="M5 4H14Q18 4 18 7V15Q18 18 15 18H6Q3 18 3 15V5" /> },
  { label: '交点', width: 'w-[31px]', menu: false, icon: <path d="M1 1L19 19M19 1L1 19" stroke="#9a9a9a" /> },
  { label: '角度', width: 'w-[45px]', menu: true, icon: <path d="M17 3L2 18H18M8 9L11 12" /> },
  { label: '偏移', width: 'w-[45px]', menu: true, icon: <path d="M1 6H9M5 2V10M9 14H19V18H9ZM10 16H18" /> },
  { label: '图层', width: 'w-[31px]', menu: false, icon: <path d="M3 2H14V14H3ZM4 4H13M4 6H13M4 8H13M4 10H13M4 12H13M17 5V10M6 17H12M14 12L19 17L14 18Z" /> },
  { label: '弧线', width: 'w-[31px]', menu: false, icon: <path d="M2 18Q3 4 10 4H18M13 11L18 16L14 18Z" /> },
];

const StatusBar: React.FC = () => (
  <footer className="flex h-[28px] shrink-0 items-center overflow-hidden bg-[#fbfbfb] text-[15px] whitespace-nowrap text-[#333]">
    <div className="flex items-center pt-[10px]">
      <span className="-ml-[2px] w-[47px]">层高：</span>
      <span className="w-[62px]">5.55</span>
      <span className="w-[50px]">标高：</span>
      <span className="w-[125px]">21.95~27.5</span>
      <span className="w-[138px]">选中图元：1(2)</span>
      <span className="w-[137px]">隐藏图元：0</span>
    </div>
    <div className="flex gap-[5px] self-start pt-1">
      {statusTools.map((tool) => (
        <button
          key={tool.label}
          aria-label={tool.label}
          className={`flex h-7 items-center justify-center gap-[7px] rounded-t-sm border ${tool.width} ${
            tool.active ? 'border-[#2b80e0] bg-[#d6e6fb]' : 'border-[#bdbdbd] bg-white'
          }`}
        >
          <svg width="20" height="20" viewBox="0 0 20 20" fill="none" stroke={DARK} strokeWidth="1.500" className="mt-1 shrink-0">
            {tool.icon}
            {tool.active && <circle cx="4" cy="4" r="2" fill="#fff" stroke={BLUE} />}
          </svg>
          {tool.menu && <Caret />}
        </button>
      ))}
    </div>
    <button aria-label="全屏" className="ml-[20px] pt-[8px]">
      <svg width="20" height="20" viewBox="0 0 20 20" fill="none" stroke="#333" strokeWidth="1.500"><path d="M12 8L19 1M13 1H19V7M8 12L1 19M7 19H1V13" /></svg>
    </button>
    <div className="ml-auto flex items-center pt-[10px]">
      <span className="flex size-[17px] items-center justify-center rounded-full bg-[#f78f2d] text-xs font-bold text-white">!</span>
      <a href="#check" className="ml-2">合法性检查存在问题，请点击查看</a>
      <svg width="17" height="17" viewBox="0 0 17 17" className="ml-[15px]"><circle cx="8.500" cy="8.500" r="8.500" fill="#62b51b" /><path d="M4 9L8 12L13 5" fill="none" stroke="#fff" strokeWidth="1.500" /></svg>
      <span className="ml-2 w-[41px] overflow-hidden">实时计算</span>
    </div>
  </footer>
);

const App: React.FC = () => (
  <div className="relative flex h-screen flex-col overflow-hidden border-x border-b border-[#6b6b6b] bg-white font-['Open_Sans','Noto_Sans_CJK_SC',sans-serif]">
    <TitleBar />
    <TabRow />
    <Ribbon />
    <ContextBar />
    <main className="flex min-h-0 flex-1">
      <NavPanel />
      <div className="ml-[5px] flex w-[349px] shrink-0 flex-col text-[15px] text-[#333]">
        <ComponentPanel />
        <PropertyPanel />
      </div>
      <div className="ml-[6px] min-w-0 flex-1 overflow-hidden">
        <Drawing />
      </div>
      <LayerPanel />
    </main>
    <StatusBar />
    <RebarDialog />
  </div>
);

export default App;
